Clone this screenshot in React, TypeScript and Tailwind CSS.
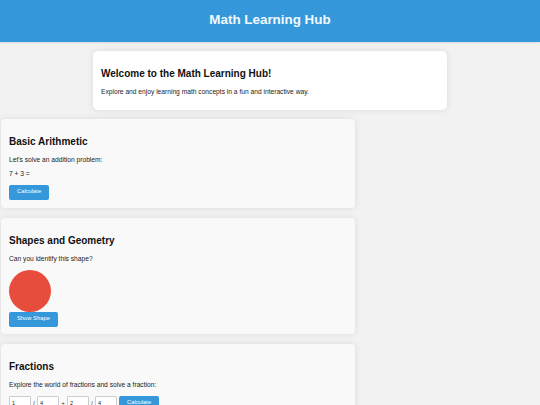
import { useState } from "react";

const FONT = "font-['Liberation_Sans',Arial,sans-serif]";

function Card({
  title,
  children,
  pb = "pb-[8px]",
}: {
  title: string;
  children: React.ReactNode;
  pb?: string;
}) {
  return (
    <section
      className={`w-[354px] ml-[1px] bg-[#f9f9f9] rounded-[4px] shadow-[0_0_7px_rgba(0,0,0,0.1)] px-[8px] pt-[17.5px] ${pb}`}
    >
      <h2 className="text-[10px] leading-[11.5px] font-bold text-[#111]">{title}</h2>
      {children}
    </section>
  );
}

function Button({ label, onClick }: { label: string; onClick?: () => void }) {
  return (
    <button
      onClick={onClick}
      className="h-[15px] px-[8px] bg-[#3498db] text-white text-[5.8px] rounded-[2px] leading-none"
    >
      {label}
    </button>
  );
}

export default function App() {
  const [showShape, setShowShape] = useState(false);
  const [result, setResult] = useState<string | null>(null);

  return (
    <div className={`min-h-[405px] bg-[#f2f2f2] ${FONT} text-[#222]`}>
      {/* Header */}
      <header className="h-[42px] bg-[#3498db] flex items-center justify-center shadow-[0_1px_2px_rgba(0,0,0,0.1)]">
        <h1 className="text-[13.4px] font-bold text-[#f2f8fc] -mt-[1px]">Math Learning Hub</h1>
      </header>

      {/* Welcome */}
      <section className="w-[354px] mx-auto mt-[9px] bg-white rounded-[5px] shadow-[0_0_7px_rgba(0,0,0,0.1)] px-[8px] pt-[17px] pb-[14px]">
        <h2 className="text-[10px] leading-[11.5px] font-bold text-[#111]">
          Welcome to the Math Learning Hub!
        </h2>
        <p className="mt-[8.3px] text-[6.67px] leading-[7.7px]">
          Explore and enjoy learning math concepts in a fun and interactive way.
        </p>
      </section>

      <div className="flex flex-col gap-[10px] mt-[9px]">
        <Card title="Basic Arithmetic">
          <p className="mt-[8.4px] text-[6.67px] leading-[7.7px]">Let's solve an addition problem:</p>
          <p className="mt-[6.3px] text-[6.67px] leading-[7.7px]">7 + 3 = {result ?? ""}</p>
          <div className="mt-[7px] flex">
            <Button label="Calculate" onClick={() => setResult("10")} />
          </div>
        </Card>

        <Card title="Shapes and Geometry" pb="pb-[7px]">
          <p className="mt-[8.4px] text-[6.67px] leading-[7.7px]">Can you identify this shape?</p>
          <div className="mt-[7px] w-[42px] h-[42px] rounded-full bg-[#e74c3c]" />
          <div className="flex">
            <Button label="Show Shape" onClick={() => setShowShape(!showShape)} />
          </div>
        </Card>

        <Card title="Fractions">
          <p className="mt-[8.4px] text-[6.67px] leading-[7.7px]">
            Explore the world of fractions and solve a fraction:
          </p>
          <div className="mt-[7px] flex items-center text-[5.5px] leading-none">
            <input
              defaultValue="1"
              className="w-[22px] h-[14px] bg-white border border-[#ccc] rounded-[1px] px-[2px] outline-none"
            />
            <span className="w-[6px] text-center">/</span>
            <input
              defaultValue="4"
              className="w-[22px] h-[14px] bg-white border border-[#ccc] rounded-[1px] px-[2px] outline-none"
            />
            <span className="w-[8px] text-center">+</span>
            <input
              defaultValue="2"
              className="w-[22px] h-[14px] bg-white border border-[#ccc] rounded-[1px] px-[2px] outline-none"
            />
            <span className="w-[6px] text-center">/</span>
            <input
              defaultValue="4"
              className="w-[22px] h-[14px] bg-white border border-[#ccc] rounded-[1px] px-[2px] outline-none"
            />
            <div className="ml-[2px] flex">
              <Button label="Calculate" />
            </div>
          </div>
        </Card>
      </div>
    </div>
  );
}
